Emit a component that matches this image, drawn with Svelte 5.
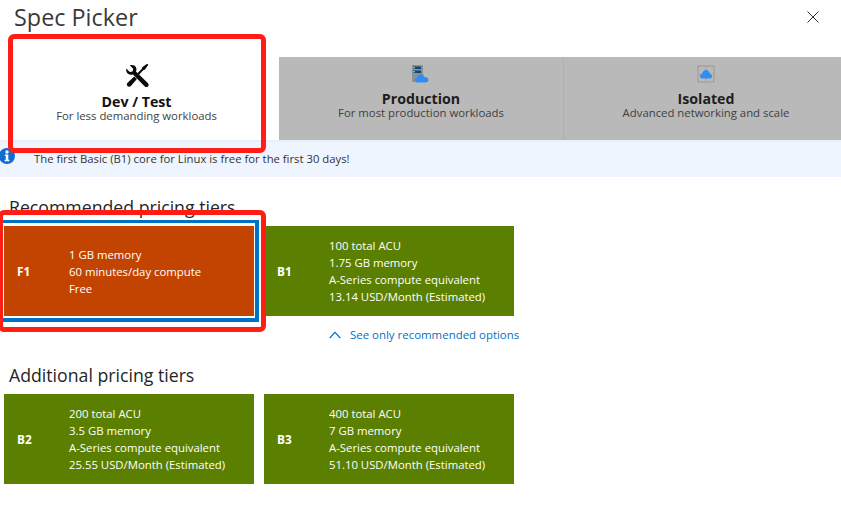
<script>
  const recommended = [
    { id: 'F1', lines: ['1 GB memory', '60 minutes/day compute', 'Free'], selected: true },
    { id: 'B1', lines: ['100 total ACU', '1.75 GB memory', 'A-Series compute equivalent', '13.14 USD/Month (Estimated)'] }
  ];
  const additional = [
    { id: 'B2', lines: ['200 total ACU', '3.5 GB memory', 'A-Series compute equivalent', '25.55 USD/Month (Estimated)'] },
    { id: 'B3', lines: ['400 total ACU', '7 GB memory', 'A-Series compute equivalent', '51.10 USD/Month (Estimated)'] }
  ];
</script>

{#snippet card(t)}
  <div class="card" class:selected={t.selected}>
    <div class="tier">{t.id}</div>
    <div class="spec">
      {#each t.lines as l}<div>{l}</div>{/each}
    </div>
  </div>
{/snippet}

<div class="page">
  <header>
    <h1>Spec Picker</h1>
    <svg class="close" viewBox="0 0 12 12" width="12" height="12"><path d="M.5.5l11 11M11.500.5l-11 11" stroke="#333" stroke-width="1" fill="none"/></svg>
  </header>

  <div class="tabs">
    <div class="tab active">
      <svg class="ico tools" viewBox="0 0 24 24" width="24" height="24">
        <path d="M1.300 4.500 4.800 8l2.700-.6.700-2.700L4.800 1.300C7.500.3 10.600 1.300 11.300 4.200c.3 1.200.2 2.400-.3 3.300l12 11.700c.9.900.9 2.200 0 3.200-.9.900-2.300.9-3.200 0L8 10.400c-1.100.4-2.300.5-3.400.2C2 9.700.6 7.400 1.300 4.500z" fill="#0b0b0b"/>
        <path d="M23.300.8l-3.500 5-1.600.5-4.200 4.400-1.500-1.500 4.300-4.400.4-1.600 5-3.500zM9.200 12.400l2.700 2.700-6 6.900c-1 1-2.500 1-3.400.1-1-1-.9-2.400.1-3.400l6.600-6.300z" fill="#0b0b0b"/>
      </svg>
      <div class="name">Dev / Test</div>
      <div class="desc">For less demanding workloads</div>
    </div>
    <div class="tab">
      <svg class="ico" viewBox="0 0 18 18" width="18" height="18">
        <rect x="0" y="0" width="11" height="17" fill="#8d9196"/>
        <rect x="1" y="1.500" width="8" height="2.500" fill="#15456b"/>
        <rect x="1" y="5.500" width="8" height="2.500" fill="#15456b"/>
        <rect x="1" y="2" width="2" height="1.500" fill="#38c6e8"/>
        <rect x="1" y="6" width="2" height="1.500" fill="#38c6e8"/>
        <path d="M6 17.500c-2 0-3-1.200-3-2.600 0-1.300 1-2.300 2.300-2.400.3-2 1.800-3.200 3.600-3.200 1.700 0 3 1 3.500 2.700 2-.1 4 .9 4 3 0 1.500-1.200 2.500-2.800 2.500z" fill="#2f8fef"/>
      </svg>
      <div class="name">Production</div>
      <div class="desc">For most production workloads</div>
    </div>
    <div class="tab">
      <svg class="ico" viewBox="0 0 18 18" width="18" height="18">
        <rect x="1" y="1" width="16" height="16" fill="none" stroke="#9a9a9a" stroke-width="1"/>
        <path d="M9 1v16M1 9h16" stroke="#a5a5a5" stroke-width="1"/>
        <path d="M5.500 13.500c-1.500 0-2.500-1-2.500-2.300 0-1.200.9-2 2-2.100.3-2 2-4.100 4-4.100s3.600 2.100 4 4.100c1.100.1 2 .9 2 2.100 0 1.300-1 2.300-2.500 2.300z" fill="#2f8fef"/>
      </svg>
      <div class="name">Isolated</div>
      <div class="desc">Advanced networking and scale</div>
    </div>
  </div>

  <div class="banner">
    <svg class="info" viewBox="0 0 16 16" width="16" height="16">
      <circle cx="8" cy="8" r="8" fill="#0f6cd0"/>
      <circle cx="8" cy="4" r="1.700" fill="#fff"/>
      <path d="M5.800 6.600h3.500v5.200h1.100v1.500H5.700v-1.500h1.100V8.100h-1z" fill="#fff"/>
    </svg>
    <span>The first Basic (B1) core for Linux is free for the first 30 days!</span>
  </div>

  <h2 class="rec">Recommended pricing tiers</h2>
  <div class="cards">
    {#each recommended as t}{@render card(t)}{/each}
  </div>
  <div class="see">
    <svg viewBox="0 0 12 8" width="12" height="8"><path d="M.7 7 6 1.300 11.300 7" fill="none" stroke="#0072c6" stroke-width="1.200"/></svg>
    <span>See only recommended options</span>
  </div>

  <h2 class="add">Additional pricing tiers</h2>
  <div class="cards">
    {#each additional as t}{@render card(t)}{/each}
  </div>

  <div class="hl hl-tab"></div>
  <div class="hl hl-card"></div>
</div>

<style>
  :global(body) { margin: 0; background: #fff; }
  .page {
    position: relative;
    width: 841px;
    height: 506px;
    overflow: hidden;
    font-family: "Open Sans", "Noto Sans", sans-serif;
    color: #252525;
  }
  header {
    height: 57px;
    display: flex;
    justify-content: space-between;
    padding: 0 22px 0 14px;
    box-sizing: border-box;
  }
  h1 {
    margin: 3px 0 0;
    font-size: 23.400px;
    line-height: 28px;
    font-weight: 400;
    color: #3a3a3a;
  }
  .close { margin-top: 11px; }
  .tabs {
    display: flex;
    margin-left: -6px;
    height: 83px;
  }
  .tab {
    flex: 0 0 285px;
    box-sizing: border-box;
    background: #b9b9b9;
    border-right: 1px solid #b0b0b0;
    text-align: center;
    padding-top: 8px;
    color: #1d1d1d;
  }
  .tab.active {
    background: #fff;
    border-right: 0;
    margin-top: -20px;
    padding-top: 27px;
    height: 103px;
    color: #111;
  }
  .ico { display: block; margin: 0 auto 9px; }
  .tab.active .ico { margin-bottom: 7px; }
  .name { font-size: 14.200px; line-height: 14px; font-weight: 700; }
  .desc { font-size: 11.350px; line-height: 13px; color: #3f3f3f; }
  .banner {
    height: 37px;
    background: #eff5ff;
    display: flex;
    align-items: flex-start;
    font-size: 11.300px;
    line-height: 37px;
    color: #333;
    box-shadow: inset 0 2px 2px -1px #e6e9ef;
  }
  .info { margin: 8px 0 0 -1px; flex: none; }
  .banner span { margin-left: 19px; }
  h2 {
    font-weight: 400;
    font-size: 17.700px;
    line-height: 22px;
    color: #252525;
  }
  .rec { margin: 19px 0 0 9px; }
  .add { margin: 21px 0 8px 9px; }
  .cards {
    display: flex;
    gap: 10px;
    margin: 8px 0 0 4px;
  }
  .add + .cards { margin-top: 0; }
  .card {
    position: relative;
    width: 250px;
    height: 90px;
    background: #5b7f00;
    color: #fff;
    display: flex;
    align-items: center;
    font-size: 11.350px;
    line-height: 17px;
  }
  .card.selected { background: #c34300; }
  .card.selected::after {
    content: "";
    position: absolute;
    inset: -6px -5px;
    border: solid #0072c6;
    border-width: 3px 4px 4px;
  }
  .tier { width: 65px; padding-left: 13px; box-sizing: border-box; font-weight: 700; font-size: 11.800px; }
  .spec { white-space: nowrap; }
  .see {
    display: flex;
    align-items: center;
    gap: 9px;
    margin: 11px 0 0 329px;
    font-size: 11.450px;
    line-height: 16px;
    color: #0072c6;
  }
  .hl {
    position: absolute;
    box-sizing: border-box;
    border: 5px solid #ff1d15;
    border-radius: 6px;
    pointer-events: none;
  }
  .hl-tab { left: 8px; top: 34px; width: 258px; height: 119px; }
  .hl-card { left: -2px; top: 210px; width: 268px; height: 122px; }
</style>
